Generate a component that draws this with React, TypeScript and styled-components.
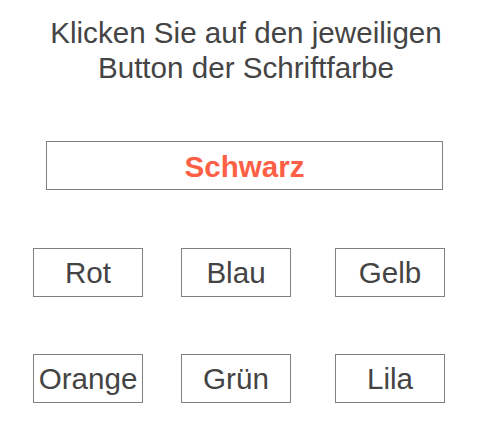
import React from "react";
import styled, { createGlobalStyle } from "styled-components";

const GlobalStyle = createGlobalStyle`
  html, body {
    margin: 0;
    padding: 0;
    background: #ffffff;
  }
  body {
    font-family: "Liberation Sans", Arial, sans-serif;
    color: #444444;
  }
`;

const Page = styled.div`
  width: 492px;
  padding-top: 15px;
  display: flex;
  flex-direction: column;
  align-items: flex-start;
`;

const Title = styled.h1`
  align-self: stretch;
  margin: 0;
  font-size: 29.6px;
  font-weight: normal;
  line-height: 35px;
  text-align: center;
  color: #444444;
`;

const Display = styled.div`
  box-sizing: border-box;
  margin: 56px 0 0 46px;
  width: 397px;
  height: 49px;
  padding-top: 3px;
  border: 1px solid #808080;
  display: flex;
  align-items: center;
  justify-content: center;
  font-size: 29.6px;
  font-weight: bold;
  color: #ff5f45;
`;

const ButtonGrid = styled.div`
  margin: 58px 0 0 33px;
  display: grid;
  grid-template-columns: 148px 154px 110px;
  row-gap: 57px;
`;

const ColorButton = styled.button`
  box-sizing: border-box;
  width: 110px;
  height: 49px;
  padding: 1px 0 0;
  border: 1px solid #808080;
  background: #ffffff;
  font-family: "Liberation Sans", Arial, sans-serif;
  font-size: 29.6px;
  color: #444444;
  display: flex;
  align-items: center;
  justify-content: center;
  white-space: nowrap;
  cursor: pointer;
`;

const colors = ["Rot", "Blau", "Gelb", "Orange", "Grün", "Lila"];

export default function App() {
  return (
    <>
      <GlobalStyle />
      <Page>
        <Title>
          Klicken Sie auf den jeweiligen
          <br />
          Button der Schriftfarbe
        </Title>
        <Display>Schwarz</Display>
        <ButtonGrid>
          {colors.map((c) => (
            <ColorButton key={c}>{c}</ColorButton>
          ))}
        </ButtonGrid>
      </Page>
    </>
  );
}
